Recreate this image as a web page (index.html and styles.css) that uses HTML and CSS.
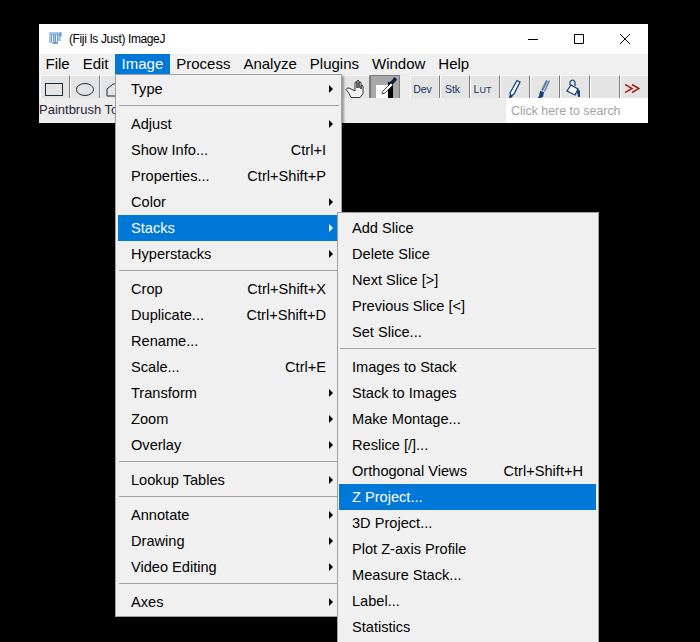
FILE: index.html
```html
<!DOCTYPE html>
<html lang="en">
<head>
  <meta charset="UTF-8">
  <title>(Fiji Is Just) ImageJ</title>
  <link rel="stylesheet" href="styles.css">
</head>
<body>
  <section class="window">
    <header class="titlebar">
      <svg class="app-icon" width="13" height="13" viewBox="0 0 13 13">
        <path d="M0 0h13v5h-1v4H9v3H3v-1H0z" fill="#a6c6ec"/>
        <path d="M2 2h3v7H2zM6 2h3v8q0 2-2 2H4v-2h2zM10 1h2v3h-2z" fill="#6a9ad6"/>
        <path d="M3 3h1v6H3zM7 3h1v7H7z" fill="#fff"/>
      </svg>
      <span class="title">(Fiji Is Just) ImageJ</span>
      <div class="controls">
        <svg width="12" height="12" viewBox="0 0 12 12"><path d="M1 6.500h10" stroke="#000" fill="none"/></svg>
        <svg width="12" height="12" viewBox="0 0 12 12"><path d="M1.500 1.500h9v9h-9z" stroke="#000" fill="none"/></svg>
        <svg width="12" height="12" viewBox="0 0 12 12"><path d="M1 1l10 10M11 1L1 11" stroke="#000" fill="none"/></svg>
      </div>
    </header>

    <nav class="menubar">
      <span class="menubar-item">File</span>
      <span class="menubar-item">Edit</span>
      <span class="menubar-item active">Image</span>
      <span class="menubar-item">Process</span>
      <span class="menubar-item">Analyze</span>
      <span class="menubar-item">Plugins</span>
      <span class="menubar-item">Window</span>
      <span class="menubar-item">Help</span>
    </nav>

    <div class="toolbar">
      <div class="tool shift-left"><svg width="19" height="14" viewBox="0 0 19 14"><rect x=".5" y=".5" width="17" height="12" fill="none" stroke="#1c2b3a"/></svg></div>
      <div class="tool"><svg width="19" height="14" viewBox="0 0 19 14"><ellipse cx="9" cy="6.500" rx="8.500" ry="6" fill="none" stroke="#1c2b3a"/></svg></div>
      <div class="tool"><svg width="19" height="14" viewBox="0 0 19 14"><path d="M1 13V6l6-5h8l3 12z" fill="none" stroke="#1c2b3a"/></svg></div>
      <div class="tool"></div>
      <div class="tool"></div>
      <div class="tool"></div>
      <div class="tool"></div>
      <div class="tool"></div>
      <div class="tool"></div>
      <div class="tool"></div>
      <div class="tool icon-high">
        <svg width="20" height="20" viewBox="0 0 20 20"><path d="M1 10.500l3 4 2 4h9l3-4V7q-1-1.500-2 0v3V3.500q-1-1.500-2 0V9V2q-1-1.500-2 0v7V3.500q-1-1.500-2 0V12L4 9q-2-.5-3 1.500z" fill="#f4f4f4" stroke="#222" stroke-width=".9"/></svg>
      </div>
      <div class="tool selected">
        <svg width="26" height="22" viewBox="0 0 26 22"><path d="M4 9h12v13H4z" fill="#fff"/><path d="M16 6h5v16h-5z" fill="#000"/><path d="M11 15l8-8 2 2-8 8-3 1z" fill="#fff" stroke="#222" stroke-width=".8"/><path d="M18 6l3-3 1-2 3 2-1 2-3 3z" fill="#0c2440"/></svg>
      </div>
      <div class="tool-gap"></div>
      <div class="tool text-tool">Dev</div>
      <div class="tool text-tool">Stk</div>
      <div class="tool text-tool">L<small>UT</small></div>
      <div class="tool icon-high">
        <svg width="14" height="20" viewBox="0 0 14 20"><path d="M9 1.500l3 1.500-6 12-3 2-1-3z" fill="#fff" stroke="#12407c" stroke-width="1.300"/><path d="M2 15l3 2-3 3-1-2z" fill="#12407c"/></svg>
      </div>
      <div class="tool icon-high shift-left">
        <svg width="16" height="20" viewBox="0 0 16 20"><path d="M10 1l2 1-5 10-2-1zM13 1l1 1-5 11-1-1z" fill="#5a7fa8"/><path d="M4 12l4 1-1 5-6 2 2-3z" fill="#12407c"/></svg>
      </div>
      <div class="tool icon-high bucket-tool">
        <svg width="15" height="20" viewBox="0 0 15 20"><path d="M4 6V3q1-2 2.500-2T9 3v4" fill="none" stroke="#12407c" stroke-width="1.200"/><path d="M5 6l7 4-3 6-8-4z" fill="#fff" stroke="#12407c" stroke-width="1.300"/><path d="M11 9l3 3v6h-2l-1-5z" fill="#12407c"/></svg>
      </div>
      <div class="tool"></div>
      <div class="tool arrow-tool">
        <svg width="15" height="9" viewBox="0 0 15 9"><path d="M0 .5l7 4-7 4M7 .5l7 4-7 4" fill="none" stroke="#a01818" stroke-width="1.500"/></svg>
      </div>
    </div>

    <footer class="statusbar">
      <span class="status-text">Paintbrush Tool</span>
      <span class="search">Click here to search</span>
    </footer>
  </section>

  <ul class="menu image-menu">
    <li class="item sub">Type</li>
    <li class="sep"></li>
    <li class="item sub">Adjust</li>
    <li class="item"><span>Show Info...</span><span>Ctrl+I</span></li>
    <li class="item"><span>Properties...</span><span>Ctrl+Shift+P</span></li>
    <li class="item sub">Color</li>
    <li class="item sub active">Stacks</li>
    <li class="item sub">Hyperstacks</li>
    <li class="sep"></li>
    <li class="item"><span>Crop</span><span>Ctrl+Shift+X</span></li>
    <li class="item"><span>Duplicate...</span><span>Ctrl+Shift+D</span></li>
    <li class="item">Rename...</li>
    <li class="item"><span>Scale...</span><span>Ctrl+E</span></li>
    <li class="item sub">Transform</li>
    <li class="item sub">Zoom</li>
    <li class="item sub">Overlay</li>
    <li class="sep"></li>
    <li class="item sub">Lookup Tables</li>
    <li class="sep"></li>
    <li class="item sub">Annotate</li>
    <li class="item sub">Drawing</li>
    <li class="item sub">Video Editing</li>
    <li class="sep"></li>
    <li class="item sub">Axes</li>
  </ul>

  <ul class="menu stacks-menu">
    <li class="item">Add Slice</li>
    <li class="item">Delete Slice</li>
    <li class="item">Next Slice [&gt;]</li>
    <li class="item">Previous Slice [&lt;]</li>
    <li class="item">Set Slice...</li>
    <li class="sep"></li>
    <li class="item">Images to Stack</li>
    <li class="item">Stack to Images</li>
    <li class="item">Make Montage...</li>
    <li class="item">Reslice [/]...</li>
    <li class="item"><span>Orthogonal Views</span><span>Ctrl+Shift+H</span></li>
    <li class="item active">Z Project...</li>
    <li class="item">3D Project...</li>
    <li class="item">Plot Z-axis Profile</li>
    <li class="item">Measure Stack...</li>
    <li class="item">Label...</li>
    <li class="item">Statistics</li>
  </ul>
</body>
</html>
```

FILE: styles.css
```css
*,
*::before,
*::after{
  box-sizing: border-box;
}
html, body{
  height: 642px;
}
body{
  margin: 0;
  background-color: #000;
  overflow: hidden;
  position: relative;
  font-family: "Liberation Sans", Arial, sans-serif;
  font-size: 14.6px;
  color: #000;
}

/* main imagej window */
.window{
  position: absolute;
  left: 39px;
  top: 24px;
  width: 609px;
  height: 99px;
  background-color: #ececec;
  overflow: hidden;
}
.titlebar{
  display: flex;
  align-items: center;
  height: 30px;
  padding-left: 10px;
  background-color: #fff;
}
.app-icon{
  margin-right: 7px;
  margin-top: -2px;
}
.title{
  font-size: 12px;
  letter-spacing: -0.38px;
  flex: 1;
}
.controls{
  display: flex;
  gap: 34px;
  padding-right: 17px;
}

.menubar{
  display: flex;
  height: 20px;
  background-color: #f0f0f0;
  font-size: 15px;
}
.menubar-item{
  padding: 0 6.5px;
  line-height: 20px;
}
.menubar-item.active{
  background-color: #0078d7;
  color: #fff;
}

.toolbar{
  display: flex;
  height: 23px;
  margin-top: 1px;
  padding-left: 1px;
  overflow: hidden;
}
.tool{
  flex: 0 0 30px;
  height: 23px;
  display: flex;
  align-items: flex-start;
  justify-content: center;
  padding-top: 7px;
  background-color: #e4e4e4;
  border-top: 1px solid #f8f8f8;
  border-left: 1px solid #fafafa;
  border-right: 1px solid #7c7c7c;
  overflow: hidden;
}
.tool.icon-high{
  padding-top: 3px;
}
.tool.shift-left{
  padding-right: 2px;
}
.tool.bucket-tool{
  padding-right: 4px;
}
.tool.selected{
  padding-top: 0;
  background-color: #a8a8a8;
  border-color: #7a7a7a;
}
.tool.arrow-tool{
  padding-top: 8px;
  padding-right: 6px;
}
.tool-gap{
  flex: 0 0 10px;
}
.text-tool{
  padding-top: 7px;
  padding-right: 5px;
  color: #0f2f66;
  font-size: 10.5px;
}
.text-tool small{
  font-size: 9px;
  align-self: flex-end;
  margin-bottom: 3px;
}

.statusbar{
  display: flex;
  justify-content: space-between;
  height: 26px;
}
.status-text{
  font-size: 13px;
  line-height: 24px;
  color: #2a2440;
}
.search{
  width: 142px;
  padding-left: 5px;
  background-color: #fff;
  color: #a3a3a3;
  font-size: 12.4px;
  line-height: 26px;
}

/* popups */
.menu{
  position: absolute;
  margin: 0;
  list-style: none;
  background-color: #f0f0f0;
  border: 1px solid #a0a0a0;
  box-shadow: 2px 2px 2px rgba(0, 0, 0, 0.35);
}
.image-menu{
  left: 115px;
  top: 74px;
  width: 227px;
  padding: 1px 2px;
}
.stacks-menu{
  left: 337px;
  top: 212px;
  width: 262px;
  height: 440px;
  padding: 2px 2px 2px 1px;
}
.item{
  display: flex;
  justify-content: space-between;
  align-items: center;
  height: 26px;
  padding: 0 13px 0 13px;
  position: relative;
}
.item.active{
  background-color: #0078d7;
  color: #fff;
}
.sub::after{
  content: "";
  position: absolute;
  right: 6px;
  top: 9px;
  border-left: 4px solid #000;
  border-top: 4px solid transparent;
  border-bottom: 4px solid transparent;
}
.sub.active::after{
  border-left-color: #fff;
}
.sep{
  height: 9px;
  padding-top: 3px;
}
.sep::before{
  content: "";
  display: block;
  height: 1px;
  margin-left: 1px;
  background-color: #a0a0a0;
}
```
